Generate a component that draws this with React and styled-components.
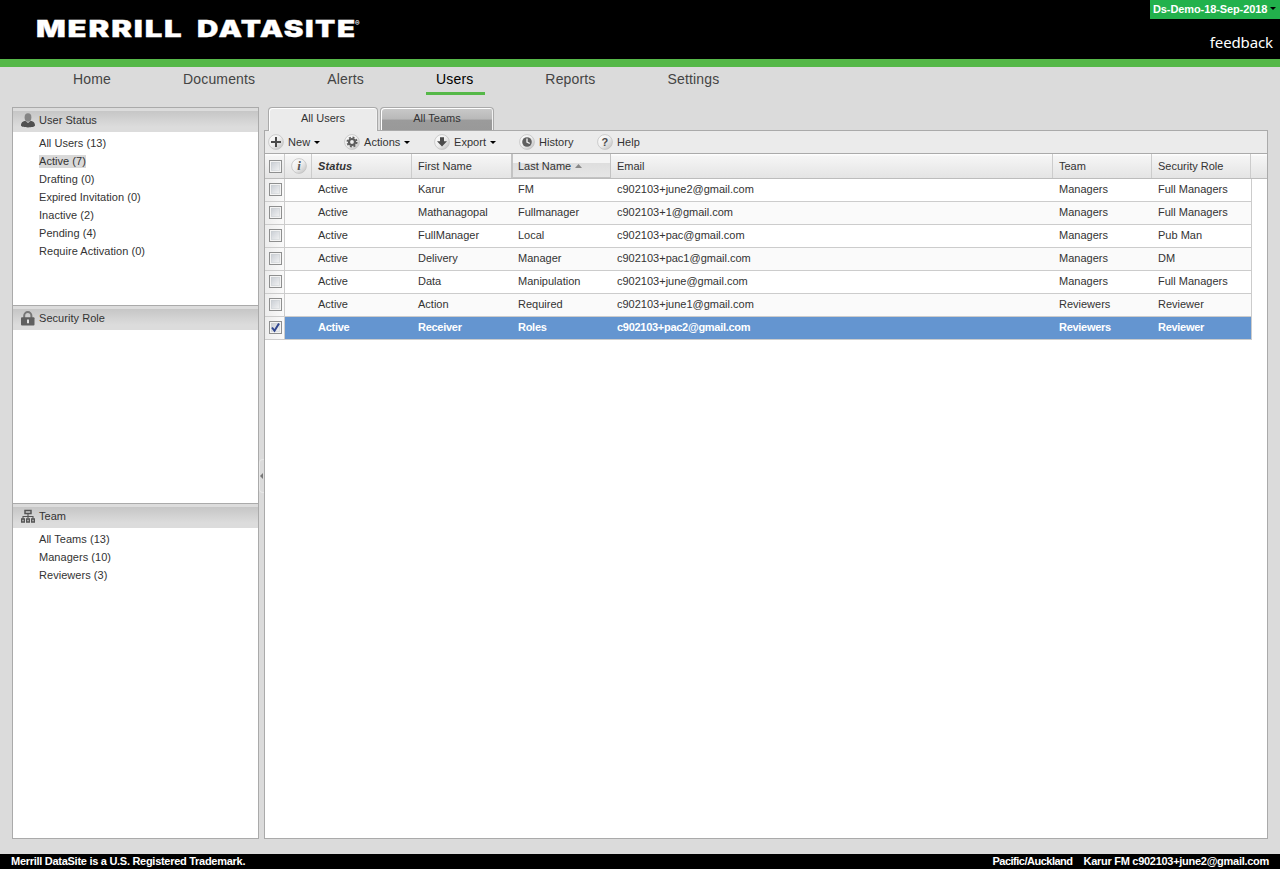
import React from "react";
import styled, { createGlobalStyle } from "styled-components";

const Global = createGlobalStyle`
  * { box-sizing: border-box; }
  html, body, #root { height: 100%; }
  body {
    margin: 0;
    overflow: hidden;
    background: #dbdbdb;
    color: #333;
    font: 11px "Liberation Sans", Arial, sans-serif;
  }
`;

const Page = styled.div`
  display: flex;
  flex-direction: column;
  height: 869px;
`;

const Header = styled.header`
  display: flex;
  justify-content: space-between;
  height: 67px;
  background: #000;
  border-bottom: 8px solid #55b848;
`;

const Logo = styled.svg`
  display: block;
  margin: 14px 0 0 36px;
  font-family: Inter, "Liberation Sans", sans-serif;
  font-weight: 900;
`;

const HeaderSide = styled.div`
  display: flex;
  flex-direction: column;
  align-items: flex-end;
`;

const Project = styled.div`
  display: flex;
  align-items: center;
  gap: 3px;
  width: 130px;
  height: 19px;
  padding: 0 0 2px 3px;
  background: #22b14c;
  color: #fff;
  font-weight: bold;
  letter-spacing: -0.1px;
  white-space: nowrap;
`;

const Feedback = styled.a`
  margin: 12px 7px 0 0;
  color: #fff;
  font: 15px/22px "Noto Sans", "Open Sans", sans-serif;
  letter-spacing: -0.12px;
`;

const Nav = styled.nav`
  display: flex;
  height: 40px;
  padding-left: 63px;
  gap: 50px;
`;

const NavItem = styled.a`
  height: 28px;
  padding: 0 12px 0 10px;
  font-size: 14px;
  line-height: 24px;
  letter-spacing: 0.16px;
  color: ${(p) => (p.$active ? "#000" : "#444")};
  border-bottom: 3px solid ${(p) => (p.$active ? "#55b848" : "transparent")};
`;

const Workspace = styled.main`
  display: flex;
  height: 732px;
  padding: 0 12px;
`;

const Sidebar = styled.aside`
  display: flex;
  flex-direction: column;
  width: 247px;
  border: 1px solid #aaa;
  border-top: 0;
  background: #fff;
`;

const Section = styled.section`
  height: ${(p) => p.$height}px;
  border-top: 1px solid #aaa;
`;

const SectionHead = styled.h2`
  display: flex;
  align-items: center;
  gap: 4px;
  height: 24px;
  margin: 0;
  padding: 0 0 4px 8px;
  border-top: 3px solid #dcdcdc;
  background: linear-gradient(#c6c6c6, #dcdcdc 75%);
  font-size: 11px;
  font-weight: normal;
  letter-spacing: 0.04px;
  svg { position: relative; top: 1px; }
`;

const List = styled.ul`
  display: flex;
  flex-direction: column;
  align-items: flex-start;
  gap: 5px;
  margin: 0;
  padding: 5px 0 0 26px;
  list-style: none;
  letter-spacing: 0.04px;
`;

const Item = styled.li`
  height: 13px;
  line-height: 13px;
  background: ${(p) => (p.$active ? "#d9d9d9" : "transparent")};
`;

const Splitter = styled.div`
  display: flex;
  align-items: center;
  width: 5px;
`;

const Handle = styled.div`
  display: flex;
  align-items: center;
  width: 5px;
  height: 34px;
  margin-top: 5px;
  border: 1px solid #e8e8e8;
  border-right: 0;
  border-radius: 4px 0 0 4px;
`;

const Main = styled.section`
  display: flex;
  flex-direction: column;
  width: 1004px;
`;

const Tabs = styled.div`
  display: flex;
  gap: 2px;
  height: 24px;
  padding-left: 4px;
  margin-bottom: -1px;
`;

const Tab = styled.div`
  position: relative;
  width: ${(p) => (p.$active ? 110 : 114)}px;
  height: ${(p) => (p.$active ? 24 : 23)}px;
  border: 1px solid #aaa;
  border-bottom: 0;
  border-radius: 4px 4px 0 0;
  box-shadow: inset 1px 1px #fff, inset -1px 0 #f2f2f2;
  background: ${(p) => (p.$active ? "#ebebeb" : "linear-gradient(#c9c9c9 0, #b9b9b9 50%, #9b9b9b 55%, #999 100%)")};
  line-height: 21px;
  text-align: center;
`;

const Panel = styled.div`
  flex: 1;
  border: 1px solid #aaa;
  background: #fff;
`;

const Toolbar = styled.div`
  display: flex;
  align-items: center;
  height: 23px;
  padding-left: 3px;
  background: #ebebeb;
  border-bottom: 1px solid #aaa;
`;

const Tool = styled.button`
  display: flex;
  align-items: center;
  width: ${(p) => p.$width}px;
  padding: 0;
  border: 0;
  background: none;
  color: #333;
  font: inherit;
  letter-spacing: 0.04px;
  svg:first-child { margin-right: 4px; }
`;

const ToolCaret = styled.span`
  display: flex;
  margin-left: 4px;
`;

const Grid = styled.div`
  display: flex;
  flex-direction: column;
`;

const columns = "20px 27px 100px 100px 99px 442px 99px 99px 16px";

const HeadRow = styled.div`
  display: grid;
  grid-template-columns: ${columns};
  height: 25px;
  background: linear-gradient(#fff 0, #f5f5f5 10%, #e4e4e4 100%);
  border-bottom: 1px solid #bcbcbc;
`;

const HeadCell = styled.div`
  display: flex;
  align-items: center;
  gap: 4px;
  padding-left: ${(p) => p.$pad ?? 6}px;
  border-right: ${(p) => (p.$last ? "0" : "1px solid #ccc")};
  ${(p) => p.$sorted && `
    margin-left: -1px;
    border: 1px solid #c3c3c3;
    border-width: 0 1px 1px 2px;
    padding-left: 5px;
    padding-top: 1px;
    background: linear-gradient(#f4f4f4 38%, #dedede 39%, #e6e6e6);
  `}
  ${(p) => p.$italic && "font-weight: bold; font-style: italic; letter-spacing: 0.1px;"}
`;

const Row = styled.div`
  display: grid;
  grid-template-columns: ${columns};
  width: 987px;
  height: 23px;
  overflow: hidden;
  border-right: 1px solid #ccc;
  border-bottom: 1px solid #ccc;
  background: ${(p) => (p.$selected ? "#6495d0" : p.$alt ? "#fafafa" : "#fff")};
  color: ${(p) => (p.$selected ? "#fff" : "#333")};
  font-weight: ${(p) => (p.$selected ? "bold" : "normal")};
`;

const Cell = styled.div`
  padding-left: 6px;
  line-height: 21px;
  letter-spacing: ${(p) => p.$track || 0}px;
  white-space: nowrap;
`;

const CheckCell = styled.div`
  display: flex;
  align-items: center;
  padding: 0 0 1px 4px;
  border-right: 1px solid #ccc;
  background: linear-gradient(90deg, #ededed, #fafafa);
`;

const Box = styled.span`
  display: flex;
  width: 13px;
  height: 13px;
  border: 1px solid #8e8f8f;
  background: linear-gradient(135deg, #c4c9d0, #f8f8f8);
  box-shadow: inset 0 0 0 1px #f4f4f4, inset 0 0 0 2px #c9ccd066;
`;

const Footer = styled.footer`
  display: flex;
  justify-content: space-between;
  height: 15px;
  margin-top: 15px;
  padding: 0 11px;
  background: #000;
  color: #fff;
  font-weight: bold;
  line-height: 14px;
  letter-spacing: -0.28px;
`;

const FooterUser = styled.div`
  display: flex;
  gap: 11px;
`;

const Zone = styled.span`
  letter-spacing: -0.5px;
`;

const Caret = ({ fill = "#000" }) => (
  <svg width="6" height="3" viewBox="0 0 6 3"><path d="M0 0h6L3 3z" fill={fill} /></svg>
);

const Check = ({ on }) => (
  <Box>{on && <svg width="11" height="11" viewBox="0 0 11 11"><path d="M2 5.5l2.5 3.3L9 1.5" fill="none" stroke="#30468f" strokeWidth="2" /></svg>}</Box>
);

const Round = ({ children }) => (
  <svg width="16" height="16" viewBox="0 0 16 16">
    <defs>
      <linearGradient id="disc" x1="0" y1="0" x2="1" y2="1">
        <stop offset="0" stopColor="#fff" />
        <stop offset=".5" stopColor="#eee" />
        <stop offset="1" stopColor="#bcbcbc" />
      </linearGradient>
    </defs>
    <circle cx="8" cy="8" r="7.4" fill="url(#disc)" stroke="#c2c2c2" strokeWidth=".8" />
    {children}
  </svg>
);

const icons = {
  plus: <path d="M8 3v10M3 8h10" stroke="#4a4a4a" strokeWidth="2" />,
  gear: (
    <g fill="none" stroke="#5c5c5c">
      <circle cx="8" cy="8" r="3" strokeWidth="2.2" />
      <circle cx="8" cy="8" r="4.7" strokeWidth="1.7" strokeDasharray="1.9 1.79" />
    </g>
  ),
  down: <path d="M6 3.2h4v4h3L8 12.5 3 7.2h3z" fill="#4a4a4a" />,
  clock: (
    <g>
      <circle cx="8" cy="8" r="4.8" fill="#606060" />
      <path d="M8 4.5V8l2.8 1.5" fill="none" stroke="#eee" strokeWidth="1.4" />
    </g>
  ),
  help: <text x="8" y="12" textAnchor="middle" fontSize="11" fontWeight="bold" fill="#4a4a4a">?</text>,
  info: <text x="8" y="12.2" textAnchor="middle" fontSize="13" fontWeight="bold" fontStyle="italic" fontFamily="Liberation Serif, serif" fill="#555">i</text>,
};

const PersonIcon = () => (
  <svg width="14" height="15" viewBox="0 0 14 15">
    <ellipse cx="7" cy="4.5" rx="3.4" ry="4.2" fill="#858585" />
    <path d="M0 12.5C0 9.2 2 8.2 4.5 8L7 10l2.5-2C12 8.2 14 9.2 14 12.5 13.5 15 .5 15 0 12.5z" fill="#505050" />
  </svg>
);

const LockIcon = () => (
  <svg width="14" height="15" viewBox="0 0 14 15">
    <path d="M3.2 7V4.7a3.6 3.6 0 017.2 0V7" fill="none" stroke="#777" strokeWidth="2" />
    <rect x="0" y="6.2" width="13.5" height="8.3" rx="1" fill="#606060" />
    <path d="M6 8.5h2v3.8H6z" fill="#e2e2e2" />
  </svg>
);

const TeamIcon = () => (
  <svg width="14" height="15" viewBox="0 0 14 15" fill="none" stroke="#555">
    <path d="M4 1.5h6v3H4z" strokeWidth="1.5" />
    <path d="M7 4.5v5M2 10V7.5h10V10" strokeWidth="1.1" />
    <path d="M.7 10h2.6v3H.7zM5.7 10h2.6v3H5.7zM10.7 10h2.6v3h-2.6z" strokeWidth="1.4" />
  </svg>
);

const nav = ["Home", "Documents", "Alerts", "Users", "Reports", "Settings"];

const sections = [
  { title: "User Status", icon: <PersonIcon />, height: 198, active: 1,
    items: ["All Users (13)", "Active (7)", "Drafting (0)", "Expired Invitation (0)", "Inactive (2)", "Pending (4)", "Require Activation (0)"] },
  { title: "Security Role", icon: <LockIcon />, height: 198, items: [] },
  { title: "Team", icon: <TeamIcon />, height: 335, items: ["All Teams (13)", "Managers (10)", "Reviewers (3)"] },
];

const tools = [
  { label: "New", icon: "plus", width: 76, menu: true },
  { label: "Actions", icon: "gear", width: 90, menu: true },
  { label: "Export", icon: "down", width: 85, menu: true },
  { label: "History", icon: "clock", width: 78 },
  { label: "Help", icon: "help", width: 60 },
];

const users = [
  ["Karur", "FM", "c902103+june2@gmail.com", "Managers", "Full Managers"],
  ["Mathanagopal", "Fullmanager", "c902103+1@gmail.com", "Managers", "Full Managers"],
  ["FullManager", "Local", "c902103+pac@gmail.com", "Managers", "Pub Man"],
  ["Delivery", "Manager", "c902103+pac1@gmail.com", "Managers", "DM"],
  ["Data", "Manipulation", "c902103+june@gmail.com", "Managers", "Full Managers"],
  ["Action", "Required", "c902103+june1@gmail.com", "Reviewers", "Reviewer"],
  ["Receiver", "Roles", "c902103+pac2@gmail.com", "Reviewers", "Reviewer"],
];

export default function App() {
  return (
    <Page>
      <Global />
      <Header>
        <Logo width="330" height="30" fill="#fff" stroke="#fff" strokeWidth=".3">
          <text x="0" y="22.6" fontSize="22.5" letterSpacing="1.3" textLength="147.5" lengthAdjust="spacingAndGlyphs">MERRILL</text>
          <text x="161" y="22.6" fontSize="22.5" letterSpacing="1.1" textLength="159.5" lengthAdjust="spacingAndGlyphs">DATASITE</text>
          <text x="319" y="12" fontSize="7" strokeWidth="0">®</text>
        </Logo>
        <HeaderSide>
          <Project>Ds-Demo-18-Sep-2018<Caret /></Project>
          <Feedback>feedback</Feedback>
        </HeaderSide>
      </Header>
      <Nav>
        {nav.map((n) => <NavItem key={n} $active={n === "Users"}>{n}</NavItem>)}
      </Nav>
      <Workspace>
        <Sidebar>
          {sections.map((s) => (
            <Section key={s.title} $height={s.height}>
              <SectionHead>{s.icon}{s.title}</SectionHead>
              <List>{s.items.map((t, i) => <Item key={t} $active={i === s.active}>{t}</Item>)}</List>
            </Section>
          ))}
        </Sidebar>
        <Splitter>
          <Handle><svg width="3" height="6" viewBox="0 0 3 6"><path d="M3 0v6L0 3z" fill="#777" /></svg></Handle>
        </Splitter>
        <Main>
          <Tabs>
            <Tab $active>All Users</Tab>
            <Tab>All Teams</Tab>
          </Tabs>
          <Panel>
            <Toolbar>
              {tools.map((t) => (
                <Tool key={t.label} $width={t.width}>
                  <Round>{icons[t.icon]}</Round>
                  <span>{t.label}</span>
                  {t.menu && <ToolCaret><Caret /></ToolCaret>}
                </Tool>
              ))}
            </Toolbar>
            <Grid>
              <HeadRow>
                <HeadCell $pad={4}><Check /></HeadCell>
                <HeadCell $pad={6}><Round>{icons.info}</Round></HeadCell>
                <HeadCell $italic>Status</HeadCell>
                <HeadCell>First Name</HeadCell>
                <HeadCell $sorted>Last Name<svg width="7" height="4" viewBox="0 0 7 4"><path d="M0 4h7L3.5 0z" fill="#888" /></svg></HeadCell>
                <HeadCell>Email</HeadCell>
                <HeadCell>Team</HeadCell>
                <HeadCell>Security Role</HeadCell>
                <HeadCell $last />
              </HeadRow>
              {users.map((u, i) => (
                <Row key={u[2]} $alt={i % 2 === 1} $selected={i === 6}>
                  <CheckCell><Check on={i === 6} /></CheckCell>
                  <Cell />
                  <Cell $track={i === 6 ? -0.28 : 0}>Active</Cell>
                  {u.map((v, j) => <Cell key={j} $track={i === 6 ? -0.28 : 0}>{v}</Cell>)}
                </Row>
              ))}
            </Grid>
          </Panel>
        </Main>
      </Workspace>
      <Footer>
        <span>Merrill DataSite is a U.S. Registered Trademark.</span>
        <FooterUser><Zone>Pacific/Auckland</Zone><span>Karur FM c902103+june2@gmail.com</span></FooterUser>
      </Footer>
    </Page>
  );
}
